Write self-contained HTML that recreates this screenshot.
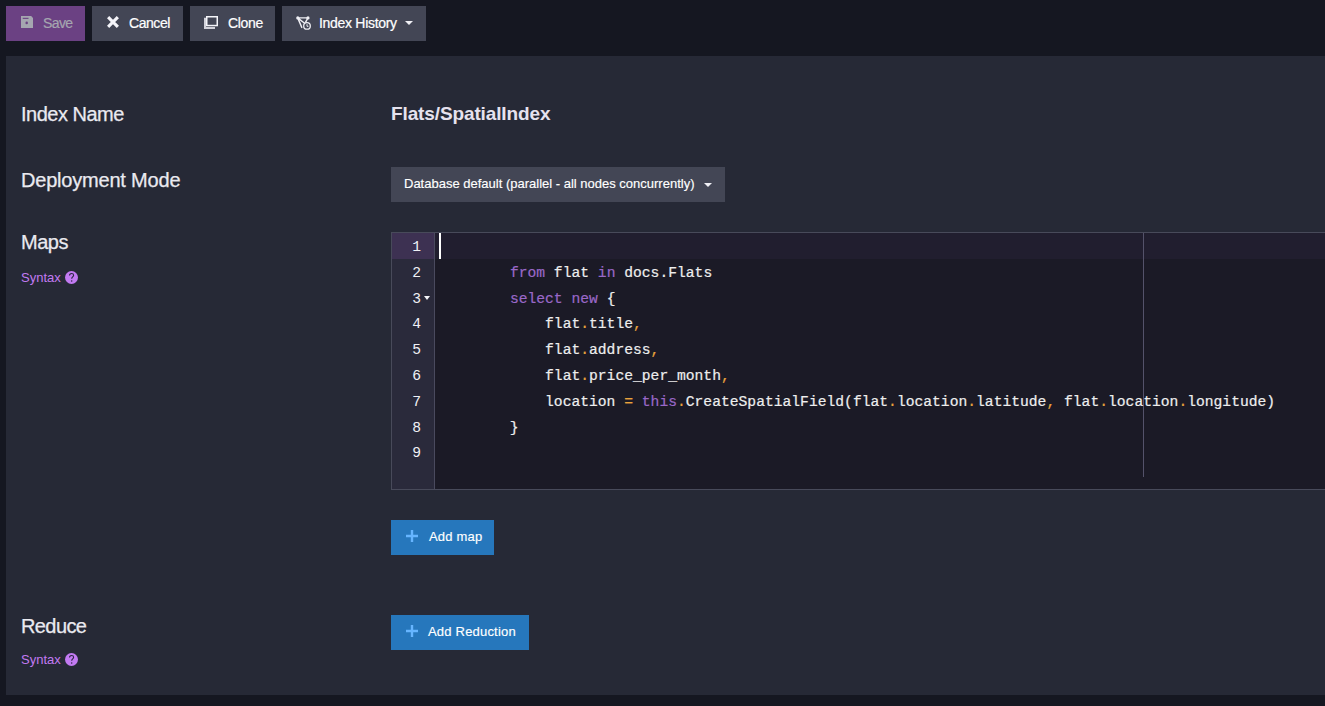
<!DOCTYPE html>
<html><head><meta charset="utf-8">
<style>
*{margin:0;padding:0;box-sizing:border-box}
html,body{width:1325px;height:706px;overflow:hidden;background:#151721;font-family:"Liberation Sans",sans-serif;color:#e8e8ef}
.abs{position:absolute}
.btn{position:absolute;top:6px;height:35px;background:#434655;color:#fff;font-size:14px;line-height:35px;letter-spacing:-0.3px;white-space:nowrap}
.btn span{-webkit-text-stroke:0.2px currentColor}
.btn span{position:absolute;top:0}
.btn svg{position:absolute}
#save{left:6px;width:79px;background:#6b4183;color:#a5a6b0}
#cancel{left:92px;width:91px}
#clone{left:190px;width:85px}
#hist{left:282px;width:144px}
#panel{position:absolute;left:6px;top:56px;width:1319px;height:639px;background:#262936}
.lbl{position:absolute;left:21px;font-size:20px;color:#eaeaf0;white-space:nowrap;-webkit-text-stroke:0.25px #eaeaf0}
.syn{position:absolute;left:21px;font-size:13px;color:#c27af2;white-space:nowrap}
.q{position:absolute}
#dd{position:absolute;left:391px;top:167px;width:334px;height:35px;background:#434655;font-size:13px;color:#fff;white-space:nowrap;-webkit-text-stroke:0.15px #fff}
#editor{position:absolute;left:391px;top:232px;width:940px;height:258px;border:1px solid #484a5a;background:#1b1a26;overflow:hidden}
#activeline{position:absolute;left:0;top:0;width:940px;height:26px;background:#211e2f}
#gutter{position:absolute;left:0;top:0;width:43px;height:256px;background:#2a2a3b;border-right:1px solid #4a4a5e}
#activegut{position:absolute;left:0;top:0;width:42px;height:26px;background:#3d3152}
#margin{position:absolute;left:751px;top:0;width:1px;height:244px;background:#54526a}
#cursor{position:absolute;left:47px;top:0;width:2px;height:26px;background:#fff}
.ln{position:absolute;right:13px;margin-top:1px;font-family:"Liberation Mono",monospace;font-size:14.667px;line-height:26px;color:#f0f0f5}
.code{position:absolute;left:47.5px;margin-top:1px;font-family:"Liberation Mono",monospace;font-size:14.667px;line-height:26px;color:#eeeeee;white-space:pre;-webkit-text-stroke:0.2px currentColor}
.k{color:#9a68c8}
.o{color:#e8a33d}
.bluebtn{position:absolute;left:391px;height:35px;background:#2677bc;color:#fff;font-size:13px;letter-spacing:0.2px;white-space:nowrap;-webkit-text-stroke:0.15px #fff}
.plus{position:absolute;left:15px;top:10px}
</style></head><body>

<div class="btn" id="save">
 <svg style="left:14.8px;top:10px" width="12.5" height="12" viewBox="0 0 13 12" preserveAspectRatio="none"><path d="M0 0H10.6L13 2.4V12H0Z" fill="#a5a6b0"/><rect x="1.8" y="1.8" width="6" height="1.1" fill="#6b4183"/><circle cx="5.9" cy="6.9" r="1.3" fill="#6b4183"/></svg>
 <span style="left:37px;letter-spacing:-0.6px">Save</span>
</div>
<div class="btn" id="cancel">
 <svg style="left:15px;top:10px" width="12" height="12" viewBox="0 0 12 12"><path d="M1.13 1.13L10.87 10.87M10.87 1.13L1.13 10.87" stroke="#f5f5fa" stroke-width="3.1" fill="none"/></svg>
 <span style="left:37px;letter-spacing:-0.45px">Cancel</span>
</div>
<div class="btn" id="clone">
 <svg style="left:14px;top:10px" width="14" height="13" viewBox="0 0 14 13"><rect x="2.75" y="0.75" width="10.5" height="8.8" fill="none" stroke="#f5f5fa" stroke-width="1.5"/><path d="M1 1.8V12H11" fill="none" stroke="#d2d2da" stroke-width="2"/></svg>
 <span style="left:38px">Clone</span>
</div>
<div class="btn" id="hist">
 <svg style="left:14px;top:10px" width="15" height="14" viewBox="0 0 15 14"><path d="M1.7 1.9H12M1.7 1.9L6 11.9M12 1.9L9.3 6.6M1.7 1.9L8.6 7.2" fill="none" stroke="#f0f0f5" stroke-width="1.4"/><circle cx="1.8" cy="1.9" r="1.6" fill="#f0f0f5"/><circle cx="12" cy="1.9" r="1.6" fill="#f0f0f5"/><circle cx="11" cy="9.9" r="3.3" fill="#434655" stroke="#f0f0f5" stroke-width="1.3"/><path d="M11 8.2V10.3H12.4" fill="none" stroke="#f0f0f5" stroke-width="1"/></svg>
 <span style="left:37px">Index History</span>
 <svg style="left:123px;top:15px" width="8" height="4" viewBox="0 0 8 4"><path d="M0 0H8L4 4Z" fill="#f0f0f5"/></svg>
</div>

<div id="panel"></div>

<div class="lbl" style="top:103px;letter-spacing:-0.5px">Index Name</div>
<div class="abs" style="left:391px;top:103px;font-size:19px;font-weight:bold;letter-spacing:-0.12px;color:#e6e2ee;white-space:nowrap">Flats/SpatialIndex</div>
<div class="lbl" style="top:169px;letter-spacing:-0.2px">Deployment Mode</div>
<div id="dd"><span class="abs" style="left:13px;top:9px">Database default (parallel - all nodes concurrently)</span>
 <svg style="position:absolute;left:313px;top:16px" width="8" height="4" viewBox="0 0 8 4"><path d="M0 0H8L4 4Z" fill="#f0f0f5"/></svg></div>
<div class="lbl" style="top:231px;letter-spacing:-0.5px">Maps</div>
<div class="syn" style="top:270px">Syntax</div>
<svg class="q" style="left:65px;top:271px" width="13" height="13" viewBox="0 0 13 13"><circle cx="6.5" cy="6.5" r="6.5" fill="#c27af2"/><path d="M4.5 4.6C4.5 3.3 5.4 2.5 6.6 2.5C7.8 2.5 8.6 3.3 8.6 4.3C8.6 5.8 6.7 5.9 6.7 7.7" fill="none" stroke="#2a2540" stroke-width="1.1"/><circle cx="6.7" cy="9.9" r="0.75" fill="#2a2540"/></svg>
<div class="lbl" style="top:615px;letter-spacing:-0.6px">Reduce</div>
<div class="syn" style="top:652px">Syntax</div>
<svg class="q" style="left:65px;top:653px" width="13" height="13" viewBox="0 0 13 13"><circle cx="6.5" cy="6.5" r="6.5" fill="#c27af2"/><path d="M4.5 4.6C4.5 3.3 5.4 2.5 6.6 2.5C7.8 2.5 8.6 3.3 8.6 4.3C8.6 5.8 6.7 5.9 6.7 7.7" fill="none" stroke="#2a2540" stroke-width="1.1"/><circle cx="6.7" cy="9.9" r="0.75" fill="#2a2540"/></svg>

<div id="editor">
<div id="activeline"></div>
<div id="gutter"><div id="activegut"></div>
<div class="ln" style="top:0.0px">1</div>
<div class="ln" style="top:25.8px">2</div>
<div class="ln" style="top:51.6px">3</div>
<svg style="position:absolute;left:32px;top:63px" width="6" height="4" viewBox="0 0 6 4"><path d="M0 0H6L3 4Z" fill="#f5f5fa"/></svg>
<div class="ln" style="top:77.4px">4</div>
<div class="ln" style="top:103.2px">5</div>
<div class="ln" style="top:129.0px">6</div>
<div class="ln" style="top:154.8px">7</div>
<div class="ln" style="top:180.6px">8</div>
<div class="ln" style="top:206.4px">9</div>
</div>
<div id="margin"></div>
<div class="code" style="top:25.8px">        <span class="k">from</span> flat <span class="k">in</span> docs.Flats</div>
<div class="code" style="top:51.6px">        <span class="k">select</span> <span class="k">new</span> {</div>
<div class="code" style="top:77.4px">            flat<span class="o">.</span>title<span class="o">,</span></div>
<div class="code" style="top:103.2px">            flat<span class="o">.</span>address<span class="o">,</span></div>
<div class="code" style="top:129.0px">            flat<span class="o">.</span>price_per_month<span class="o">,</span></div>
<div class="code" style="top:154.8px">            location <span class="o">=</span> <span class="k">this</span><span class="o">.</span>CreateSpatialField(flat<span class="o">.</span>location<span class="o">.</span>latitude<span class="o">,</span> flat<span class="o">.</span>location<span class="o">.</span>longitude)</div>
<div class="code" style="top:180.6px">        }</div>
<div id="cursor"></div>
</div>

<div class="bluebtn" style="top:520px;width:103px"><svg class="plus" width="12" height="12" viewBox="0 0 12 12"><path d="M6 0V12M0 6H12" stroke="#66b5ff" stroke-width="2.4"/></svg><span class="abs" style="left:38px;top:9px">Add map</span></div>
<div class="bluebtn" style="top:615px;width:138px"><svg class="plus" width="12" height="12" viewBox="0 0 12 12"><path d="M6 0V12M0 6H12" stroke="#66b5ff" stroke-width="2.4"/></svg><span class="abs" style="left:37px;top:9px">Add Reduction</span></div>

</body></html>
